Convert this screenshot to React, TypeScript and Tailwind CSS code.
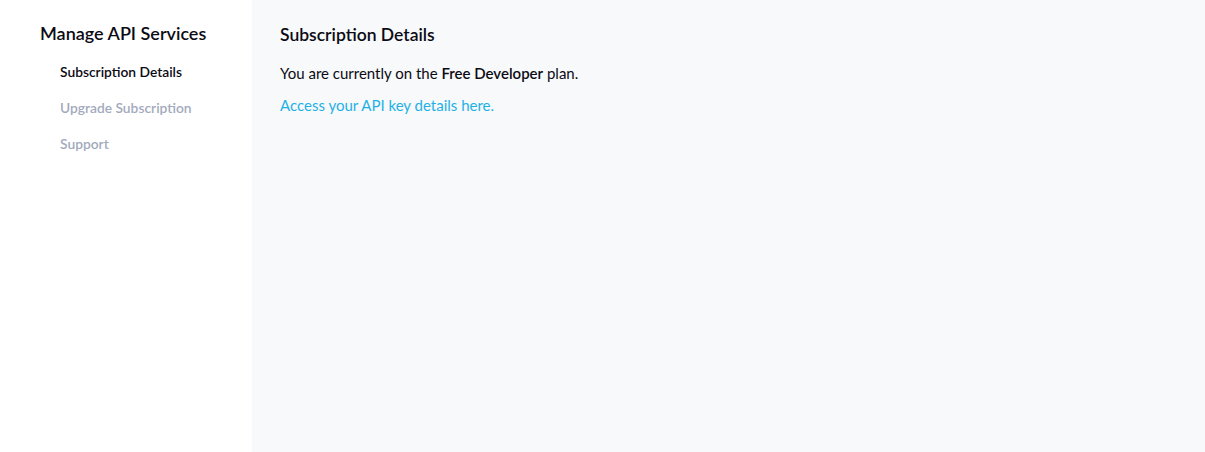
export default function App() {
  return (
    <div className="flex h-[452px] w-full bg-white text-black">
      <aside className="w-[252px] shrink-0 bg-white pl-10 pt-[21px] font-['Source_Sans_Pro','Lato','Noto_Sans',sans-serif]">
        <h2 className="text-[18px] font-semibold leading-6 text-[#0b0b14]">Manage API Services</h2>
        <nav className="mt-[18px] flex flex-col gap-[18px] pl-5 text-[13.8px] font-semibold leading-[18px]">
          <a className="text-[#0b0b14]">Subscription Details</a>
          <a className="text-[#a3aabd]">Upgrade Subscription</a>
          <a className="text-[#a3aabd]">Support</a>
        </nav>
      </aside>
      <main className="flex-1 bg-[#f8f9fb] pl-7 pt-[23px] font-['Source_Sans_Pro','Lato','Noto_Sans',sans-serif]">
        <h1 className="text-[17.5px] font-semibold leading-6 text-[#0b0b14]">Subscription Details</h1>
        <p className="mt-4 text-[15px] leading-5 text-[#0b0b14]">
          You are currently on the <span className="font-semibold">Free Developer</span> plan.
        </p>
        <a className="mt-3 block text-[15px] leading-5 text-[#1fb1e6]">Access your API key details here.</a>
      </main>
    </div>
  );
}
